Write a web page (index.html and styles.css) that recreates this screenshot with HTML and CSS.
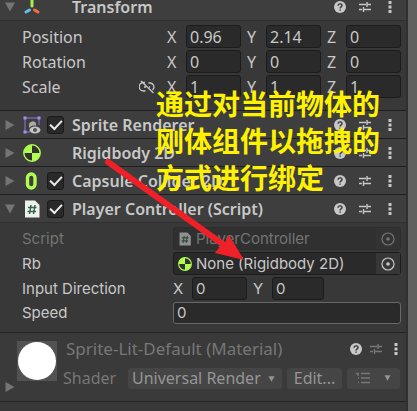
FILE: index.html
```html
<!DOCTYPE html>
<html lang="en">
<head>
<meta charset="utf-8">
<title>Inspector</title>
<link rel="stylesheet" href="styles.css">
</head>
<body>
<svg class="defs" aria-hidden="true">
  <symbol id="help" viewBox="0 0 12 12"><circle cx="6" cy="6" r="6" fill="currentColor"/><path d="M4.1 4.7C4.1 2.3 8 2.3 8 4.5C8 5.9 6.1 5.8 6.1 7.4M6.1 8.4V9.8" fill="none" stroke="#3e3e3e" stroke-width="1.5"/></symbol>
  <symbol id="preset" viewBox="0 0 12 12"><path d="M0 3.5H7M8.5 3.5H12M8 1V6M0 8.5H3M5 8.5H12M4.500 6V11" fill="none" stroke="currentColor" stroke-width="1.4"/></symbol>
  <symbol id="more" viewBox="0 0 4 12"><path d="M.5 0h3v3h-3zM.5 4.5h3v3h-3zM.5 9h3v3h-3z" fill="currentColor"/></symbol>
  <symbol id="right" viewBox="0 0 10 10"><path d="M.5 0L9.5 5L.5 10z" fill="currentColor"/></symbol>
  <symbol id="down" viewBox="0 0 10 10"><path d="M0 .5H10L5 9.5z" fill="currentColor"/></symbol>
  <symbol id="body" viewBox="0 0 18 18"><circle cx="9" cy="9" r="8.2" fill="#333" stroke="#b0ff50" stroke-width="1.4"/><path d="M9 9V1A8 8 0 0 0 1 9zM9 9V17A8 8 0 0 0 17 9z" fill="#b0ff50"/></symbol>
  <symbol id="script" viewBox="0 0 16 18"><path d="M1 .5H11L15.5 5V17.5H1z" fill="#f0f0f0"/><path d="M7 5L5.5 14M11 5L9.5 14M4 7.5H12.500M3.500 11.500H12" fill="none" stroke="#2d6b45" stroke-width="1.5"/></symbol>
  <symbol id="pick" viewBox="0 0 14 14"><circle cx="7" cy="7" r="6" fill="none" stroke="currentColor" stroke-width="1.2"/><circle cx="7" cy="7" r="1.8" fill="currentColor"/></symbol>
</svg>
<main class="inspector">
  <section>
    <header class="head head-top">
      <button class="fold" aria-label="Fold"><svg><use href="#down"/></svg></button>
      <svg class="kind" viewBox="0 0 18 18"><g fill="none" stroke-width="3" stroke-linecap="round"><path d="M9 2V8" stroke="#a6ee50"/><path d="M6.500 12L3 14" stroke="#63bff5"/><path d="M11.500 12L15 14" stroke="#ff6a3c"/></g></svg>
      <span class="tick-space"></span>
      <h2>Transform</h2>
      <button class="tool" aria-label="Help"><svg><use href="#help"/></svg></button>
      <button class="tool" aria-label="Presets"><svg><use href="#preset"/></svg></button>
      <button class="tool more" aria-label="More"><svg><use href="#more"/></svg></button>
    </header>
    <div class="props transform">
      <div class="row"><span class="name">Position</span>
        <div class="axes"><label>X<input value="0.96"></label><label>Y<input value="2.14"></label><label>Z<input value="0"></label></div></div>
      <div class="row"><span class="name">Rotation</span>
        <div class="axes"><label>X<input value="0"></label><label>Y<input value="0"></label><label>Z<input value="0"></label></div></div>
      <div class="row"><span class="name">Scale
        <svg class="link" viewBox="0 0 16 14"><path d="M6 2.500H4.500A4 4 0 0 0 4.500 11H6.500M9.500 3H11.500A4 4 0 0 1 13.500 10M5 7H7M10 7H11M2 1L14.500 13" fill="none" stroke="currentColor" stroke-width="1.300"/></svg></span>
        <div class="axes"><label>X<input value="1"></label><label>Y<input value="1"></label><label>Z<input value="1"></label></div></div>
    </div>
  </section>
  <section>
    <header class="head">
      <button class="fold" aria-label="Fold"><svg><use href="#right"/></svg></button>
      <svg class="kind" viewBox="0 0 18 18"><path d="M2 2H16V9M2 2V16H7" fill="none" stroke="#8f7bd0"/><path d="M.5 .5h3v3h-3zM14.500 .5h3v3h-3zM.5 14.500h3v3h-3z" fill="#a78bfa"/><path d="M6 12V8A4 4 0 0 1 13 7V10C10 9 8 10 6 12z" fill="#aaa"/><ellipse cx="12" cy="14" rx="5.500" ry="3.500" fill="#c4c4c4"/><circle cx="12" cy="14" r="2" fill="#555"/></svg>
      <input type="checkbox" class="tick" aria-label="Sprite Renderer enabled" checked>
      <h2>Sprite Renderer</h2>
      <button class="tool" aria-label="Help"><svg><use href="#help"/></svg></button>
      <button class="tool" aria-label="Presets"><svg><use href="#preset"/></svg></button>
      <button class="tool more" aria-label="More"><svg><use href="#more"/></svg></button>
    </header>
  </section>
  <section>
    <header class="head">
      <button class="fold" aria-label="Fold"><svg><use href="#right"/></svg></button>
      <svg class="kind"><use href="#body"/></svg>
      <span class="tick-space"></span>
      <h2>Rigidbody 2D</h2>
      <button class="tool" aria-label="Help"><svg><use href="#help"/></svg></button>
      <button class="tool" aria-label="Presets"><svg><use href="#preset"/></svg></button>
      <button class="tool more" aria-label="More"><svg><use href="#more"/></svg></button>
    </header>
  </section>
  <section>
    <header class="head">
      <button class="fold" aria-label="Fold"><svg><use href="#right"/></svg></button>
      <svg class="kind" viewBox="0 0 18 18"><rect x="4.500" y="2" width="7.500" height="14" rx="3.700" fill="none" stroke="#b0ff50" stroke-width="3.400"/></svg>
      <input type="checkbox" class="tick" aria-label="Capsule Collider 2D enabled" checked>
      <h2>Capsule Collider 2D</h2>
      <button class="tool" aria-label="Help"><svg><use href="#help"/></svg></button>
      <button class="tool" aria-label="Presets"><svg><use href="#preset"/></svg></button>
      <button class="tool more" aria-label="More"><svg><use href="#more"/></svg></button>
    </header>
  </section>
  <section>
    <header class="head">
      <button class="fold" aria-label="Fold"><svg><use href="#down"/></svg></button>
      <svg class="kind"><use href="#script"/></svg>
      <input type="checkbox" class="tick" aria-label="Player Controller enabled" checked>
      <h2>Player Controller (Script)</h2>
      <button class="tool" aria-label="Help"><svg><use href="#help"/></svg></button>
      <button class="tool" aria-label="Presets"><svg><use href="#preset"/></svg></button>
      <button class="tool more" aria-label="More"><svg><use href="#more"/></svg></button>
    </header>
    <div class="props fields">
      <div class="row off"><span class="name">Script</span>
        <div class="object"><svg class="mini"><use href="#script"/></svg><span>PlayerController</span><button aria-label="Pick script"><svg><use href="#pick"/></svg></button></div></div>
      <div class="row"><span class="name">Rb</span>
        <div class="object"><svg class="mini"><use href="#body"/></svg><span>None (Rigidbody 2D)</span><button aria-label="Pick body"><svg><use href="#pick"/></svg></button></div></div>
      <div class="row"><span class="name">Input Direction</span>
        <div class="axes pair"><label>X<input value="0"></label><label>Y<input value="0"></label></div></div>
      <div class="row short"><label class="name" for="speed">Speed</label><input id="speed" class="wide" value="0"></div>
    </div>
  </section>
  <section class="material">
    <button class="fold" aria-label="Fold"><svg><use href="#right"/></svg></button>
    <div class="preview"><i></i></div>
    <div class="info">
      <div class="title"><h3>Sprite-Lit-Default (Material)</h3>
        <button class="tool" aria-label="Help"><svg><use href="#help"/></svg></button>
        <button class="tool dim" aria-label="Presets"><svg><use href="#preset"/></svg></button>
        <button class="tool more" aria-label="More"><svg><use href="#more"/></svg></button></div>
      <div class="shader"><label for="shader">Shader</label>
        <div class="drop"><select id="shader"><option>Universal Render</option></select><svg><use href="#down"/></svg></div>
        <button class="edit">Edit...</button>
        <button class="list" aria-label="Shader list"><svg class="lines" viewBox="0 0 14 12"><path d="M0 1.500H3M5 1.500H14M5 6H14M5 10.500H14M2 1V4M2 6H3M2 10.500H3" fill="none" stroke="currentColor" stroke-width="1.300"/></svg><svg><use href="#down"/></svg></button></div>
    </div>
  </section>
  <div class="rest"></div>
</main>
<p class="note" lang="zh-CN">通过对当前物体的<br>刚体组件以拖拽的<br>方式进行绑定</p>
<svg class="arrow" viewBox="0 0 140 105"><path d="M4 4L120 87" stroke="#ee2028" stroke-width="6" stroke-linecap="round"/><path d="M140 102L111 95L117 87L122 83L125 77z" fill="#ee2028"/></svg>
</body>
</html>
```
FILE: styles.css
```css
* { box-sizing: border-box; }

body {
  margin: 0;
  min-height: 100vh;
  position: relative;
  overflow: hidden;
  background: #606060;
  color: #c8c8c8;
  font: 16px/22px "Noto Sans", "Noto Sans CJK SC", sans-serif;
}

.defs { display: none; }

h2, h3, p { margin: 0; }

button, input, select { font: inherit; color: inherit; }

button {
  display: flex;
  align-items: center;
  justify-content: center;
  padding: 0;
  border: 0;
  background: none;
}

.inspector {
  display: flex;
  flex-direction: column;
  min-height: 100vh;
  margin-right: 9px;
  border-right: 2px solid #303030;
  background: #383838;
}

.head {
  display: flex;
  align-items: center;
  height: 28px;
  padding: 0 14px 0 5px;
  border-top: 1px solid #1e1e1e;
  background: #3e3e3e;
}

.head-top {
  height: 21px;
  padding-bottom: 6px;
  border-top: 0;
  border-bottom: 1px solid #303030;
}

.head h2 {
  flex: 1;
  font-size: 16px;
  font-weight: 600;
  white-space: nowrap;
}

.fold { width: 10px; color: #747474; }
.fold svg { width: 10px; height: 10px; }
.kind { width: 18px; height: 18px; margin: 0 6px 0 8px; }

.tick, .tick-space { flex: none; width: 17px; margin: 0 8px 0 0; }

.tick {
  appearance: none;
  display: grid;
  place-items: center;
  height: 18px;
  border: 1px solid #1a1a1a;
  border-radius: 3px;
  background: #292929;
}

.tick::after {
  content: "";
  width: 10px;
  height: 5px;
  margin-bottom: 3px;
  border: solid #eee;
  border-width: 0 0 2px 2px;
  transform: rotate(-47deg);
}

.tool { width: 12px; margin-left: 13px; color: #c8c8c8; }
.tool svg { width: 12px; height: 12px; }
.tool.more { width: 4px; margin-left: 17px; }
.tool.more svg { width: 4px; }
.tool.dim { color: #777; }

.props {
  display: grid;
  grid-template-columns: minmax(0, 1fr);
  gap: 2px;
  padding: 5px 5px 0 22px;
}

.transform { padding-top: 4px; padding-bottom: 12px; }

.fields {
  padding-top: 4px;
  padding-bottom: 8px;
  border-top: 1px solid #303030;
  font-family: Inter, sans-serif;
  font-size: 15px;
}

.row { display: flex; align-items: center; height: 23px; }
.row.short { height: 22px; }

.name {
  display: flex;
  align-items: center;
  justify-content: space-between;
  flex: none;
  width: 145px;
  padding-right: 12px;
}

.fields .name { width: 151px; }
.link { width: 16px; height: 14px; }

.axes {
  flex: 1;
  min-width: 0;
  display: grid;
  grid-template-columns: repeat(3, minmax(0, 1fr));
  gap: 6px;
}

.pair { grid-template-columns: minmax(0, 74fr) minmax(0, 71fr) minmax(0, 71fr); }

.axes label {
  display: grid;
  grid-template-columns: 19px minmax(0, 1fr);
  align-items: center;
}

.axes input, .wide {
  width: 100%;
  min-width: 0;
  height: 23px;
  padding: 0 3px;
  border: 1px solid #1c1c1c;
  border-radius: 3px;
  background: #2a2a2a;
}

.wide { flex: 1; border-color: #686868; }
.short input { height: 22px; }

.object {
  flex: 1;
  min-width: 0;
  display: flex;
  align-items: center;
  height: 23px;
  border: 1px solid #1c1c1c;
  border-radius: 3px;
  background: #2a2a2a;
}

.object span { flex: 1; white-space: nowrap; }
.object .mini { width: 14px; height: 14px; margin: 0 4px; }
.object button { width: 24px; height: 21px; background: #373737; }
.object button svg { width: 14px; height: 14px; }
.off { color: #747474; }
.off .object { border-color: #2d2d2d; background: #303030; }
.off .object button { background: #333; }
.off .mini { opacity: .5; }

.material {
  display: flex;
  height: 70px;
  padding: 8px 6px 0 5px;
  border: solid #242424;
  border-width: 1px 0;
  background: #3a3a3a;
  color: #777;
}

.material .fold { align-self: flex-start; margin-top: 41px; }

.preview {
  flex: none;
  width: 40px;
  height: 40px;
  margin-left: 2px;
  padding: 1px;
  background: #525252;
}

.preview i { display: block; height: 38px; border-radius: 50%; background: #fff; }
.info { flex: 1; min-width: 0; margin-left: 6px; }
.title { display: flex; align-items: center; height: 15px; padding: 0 2px 0 3px; }
.title h3 { flex: 1; font-size: 17px; font-weight: 400; white-space: nowrap; }
.title .tool + .tool { margin-left: 8px; }
.title .tool.more { margin-left: 12px; }
.shader { display: flex; align-items: center; gap: 5px; margin-top: 11px; }
.shader label { width: 60px; }

.drop { position: relative; flex: 1; min-width: 0; }

.drop select, .edit, .list {
  height: 21px;
  border: 0;
  border-radius: 3px;
  background: #454545;
  color: #959595;
}

.drop select {
  display: block;
  appearance: none;
  width: 100%;
  padding: 0 18px 0 4px;
  line-height: 21px;
}

.drop svg { position: absolute; right: 6px; top: 8px; }
.drop svg, .list svg { width: 9px; height: 6px; color: #959595; }
.edit { width: 55px; }
.list { width: 53px; gap: 13px; }
.list .lines { width: 14px; height: 12px; color: #777; }
.rest { flex: 1; }

.note {
  position: absolute;
  left: 156px;
  top: 85px;
  color: #fff200;
  font: 700 28px/37px "Noto Sans CJK SC", sans-serif;
  white-space: nowrap;
}

.arrow { position: absolute; left: 104px; top: 158px; width: 140px; height: 105px; }
```
